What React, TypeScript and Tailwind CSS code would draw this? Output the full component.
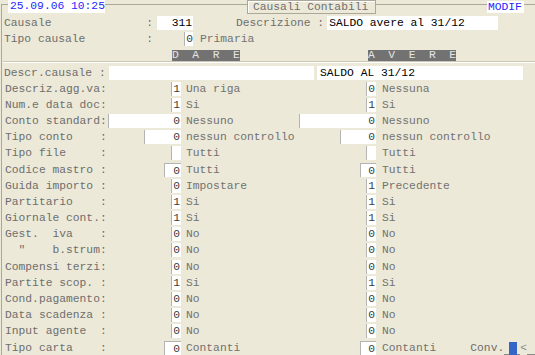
import React from 'react';

type Row = {
  label: string;
  lv: string;
  lw?: string;
  ld: string;
  rv: string;
  rw?: string;
  rd: string;
  gap?: boolean;
  conv?: boolean;
};

const ROWS: Row[] = [
  { label: 'Descriz.agg.va:', lv: '1', ld: 'Una riga', rv: '0', rd: 'Nessuna' },
  { label: 'Num.e data doc:', lv: '1', ld: 'Si', rv: '1', rd: 'Si' },
  { label: 'Conto standard:', lv: '0', lw: 'w-[73px]', ld: 'Nessuno', rv: '0', rw: 'w-[77px]', rd: 'Nessuno' },
  { label: 'Tipo conto    :', lv: '0', lw: 'w-[37px]', ld: 'nessun controllo', rv: '0', rw: 'w-[36px]', rd: 'nessun controllo' },
  { label: 'Tipo file     :', lv: '', ld: 'Tutti', rv: '', rd: 'Tutti' },
  { label: 'Codice mastro :', lv: '0', lw: 'w-[17px] border-t border-[#a9a9a9]', ld: 'Tutti', rv: '0', rw: 'w-[16px] border-t border-[#a9a9a9]', rd: 'Tutti', gap: true },
  { label: 'Guida importo :', lv: '0', ld: 'Impostare', rv: '1', rd: 'Precedente' },
  { label: 'Partitario    :', lv: '1', ld: 'Si', rv: '1', rd: 'Si' },
  { label: 'Giornale cont.:', lv: '1', ld: 'Si', rv: '1', rd: 'Si' },
  { label: 'Gest.  iva    :', lv: '0', ld: 'No', rv: '0', rd: 'No' },
  { label: '  "    b.strum:', lv: '0', ld: 'No', rv: '0', rd: 'No' },
  { label: 'Compensi terzi:', lv: '0', ld: 'No', rv: '0', rd: 'No', gap: true },
  { label: 'Partite scop. :', lv: '1', ld: 'Si', rv: '1', rd: 'Si' },
  { label: 'Cond.pagamento:', lv: '0', ld: 'No', rv: '0', rd: 'No' },
  { label: 'Data scadenza :', lv: '0', ld: 'No', rv: '0', rd: 'No' },
  { label: 'Input agente  :', lv: '0', ld: 'No', rv: '0', rd: 'No' },
  { label: 'Tipo carta    :', lv: '0', lw: 'w-[17px] border-t border-[#a9a9a9]', ld: 'Contanti', rv: '0', rw: 'w-[16px] border-t border-[#a9a9a9]', rd: 'Contanti', gap: true, conv: true },
];

const Box: React.FC<{ value: string; w?: string }> = ({ value, w }) => (
  <div className={`${w || 'w-[10px]'} h-[14px] shrink-0 bg-white border-l border-[#b4b4b4] text-right pr-[1px] leading-[14px] text-[#3a3a3a]`}>
    {value}
  </div>
);

const FieldRow: React.FC<{ r: Row }> = ({ r }) => (
  <div className={`flex h-[16px] items-center ${r.gap ? 'mt-[1px]' : ''}`}>
    {/* label + left value */}
    <div className="flex w-[178px] shrink-0 items-center pl-[2px]">
      <span className="min-w-0 whitespace-pre text-[#6e6e6e]">{r.label}</span>
      <div className="ml-auto"><Box value={r.lv} w={r.lw} /></div>
    </div>
    {/* left description + right value */}
    <div className="flex w-[195px] shrink-0 items-center">
      <span className="min-w-0 whitespace-pre pl-[5px] text-[#727272]">{r.ld}</span>
      <div className="ml-auto"><Box value={r.rv} w={r.rw} /></div>
    </div>
    {/* right description */}
    <div className="flex flex-1 items-center">
      <span className="whitespace-pre pl-[6px] text-[#727272]">{r.rd}</span>
      {r.conv && (
        <div className="ml-auto flex h-[14px] items-end">
          <span className="leading-[14px] text-[#6e6e6e]">Conv.</span>
          <span className="h-[8px] w-[5px] border-b border-[#8a8a8a]" />
          <span className="h-[13px] w-[8px] bg-[#3466c8]" />
          <span className="h-[8px] w-[3px] border-b border-[#8a8a8a]" />
          <span className="leading-[14px] text-[#8a8a8a]">&lt;</span>
          <span className="h-[8px] w-[8px] border-b border-[#8a8a8a]" />
        </div>
      )}
    </div>
  </div>
);

const App: React.FC = () => {
  return (
    <div className="w-[535px] h-[355px] overflow-hidden bg-[#ECE9D8] font-['Liberation_Mono',monospace] text-[11.3px]">
      {/* header: date, title, mode */}
      <div className="flex h-[15px] items-start">
        <div className="ml-[1px] mt-[4px] h-[11px] w-[7px] border-l border-t border-[#aca899]" />
        <div className="h-[13px] w-[97px] bg-white pl-[2px] leading-[13px] text-[#2626ff]">25.09.06 10:25</div>
        <div className="mt-[4px] w-[142px] border-t border-[#aca899]" />
        <div className="h-[14px] w-[129px] border border-[#aca899] pl-[5px] leading-[12px] text-[#707070] shadow-[inset_1px_1px_0_#ffffff]">
          Causali Contabili
        </div>
        <div className="mt-[4px] flex-1 border-t border-[#aca899]" />
        <div className="mt-[1px] h-[12px] w-[37px] bg-white pl-[1px] leading-[12px] text-[#2626ff]">MODIF</div>
        <div className="mt-[4px] w-[11px] border-t border-[#aca899]" />
      </div>

      <div className="ml-[1px] h-[340px] border-l border-[#aca899] pl-[1px]">
        {/* Causale / Descrizione */}
        <div className="flex h-[16px] items-center">
          <span className="w-[154px] shrink-0 whitespace-pre pl-[1px] text-[#6e6e6e]">Causale              :</span>
          <div className="h-[14px] w-[36px] bg-white pr-[1px] text-right leading-[14px] text-black">311</div>
          <span className="ml-[43px] whitespace-pre text-[#6e6e6e]">Descrizione :</span>
          <div className="ml-[3px] h-[14px] w-[171px] bg-white pl-[2px] leading-[14px] text-black">SALDO avere al 31/12</div>
        </div>
        <div className="flex h-[16px] items-center">
          <span className="w-[181px] shrink-0 whitespace-pre pl-[1px] text-[#6e6e6e]">Tipo causale         :</span>
          <div className="h-[14px] w-[9px] border-l border-[#b4b4b4] bg-white text-right leading-[14px] text-[#3a3a3a]">0</div>
          <span className="pl-[7px] text-[#727272]">Primaria</span>
        </div>

        {/* DARE / AVERE bands */}
        <div className="flex h-[15px] items-start border-b border-[#c9c6b6]">
          <div className="ml-[169px] mt-[3px] h-[11px] w-[68px] overflow-hidden whitespace-pre bg-[#727272] leading-[11px] text-[#e4e4e4]">D  A  R  E</div>
          <div className="ml-[128px] mt-[3px] h-[11px] w-[88px] overflow-hidden whitespace-pre bg-[#727272] leading-[11px] text-[#e4e4e4]">A  V  E  R  E</div>
        </div>
        <div className="h-[3px] border-t border-white" />

        {/* Descr.causale */}
        <div className="flex h-[16px] items-center">
          <span className="w-[106px] shrink-0 whitespace-pre pl-[1px] text-[#6e6e6e]">Descr.causale :</span>
          <div className="h-[14px] w-[205px] bg-white" />
          <div className="ml-[3px] h-[14px] w-[206px] bg-white pl-[3px] leading-[14px] text-black">SALDO AL 31/12</div>
        </div>

        {ROWS.map((r, i) => (
          <FieldRow key={i} r={r} />
        ))}
      </div>
    </div>
  );
};

export default App;
